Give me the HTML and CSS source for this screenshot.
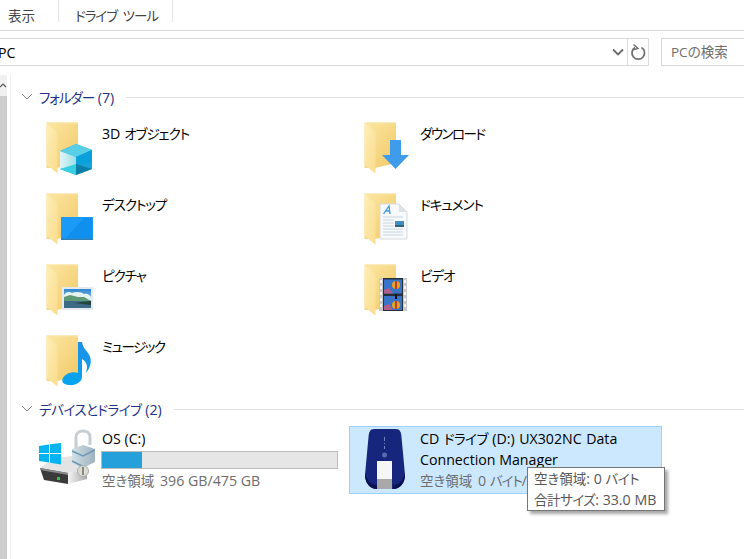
FILE: index.html
```html
<!DOCTYPE html>
<html lang="ja">
<head>
<meta charset="utf-8">
<title>PC</title>
<link rel="stylesheet" href="styles.css">
</head>
<body>
<svg class="defs" width="0" height="0">
  <defs>
    <linearGradient id="fb" x1="0" y1="0" x2="1" y2="1"><stop offset="0" stop-color="#fde7a4"/><stop offset="1" stop-color="#f0c966"/></linearGradient>
    <linearGradient id="ff" x1="0" y1="0" x2="1" y2="1"><stop offset="0" stop-color="#fdeeb8"/><stop offset="1" stop-color="#fbdc8c"/></linearGradient>
    <linearGradient id="nt" x1="0" y1="0" x2="0" y2="1"><stop offset="0" stop-color="#1f8fe6"/><stop offset="1" stop-color="#05a6f0"/></linearGradient>
    <linearGradient id="cl" x1="0" y1="0" x2="1" y2="0"><stop offset="0" stop-color="#e2f5f7"/><stop offset="1" stop-color="#9bdfe6"/></linearGradient>
    <linearGradient id="sky" x1="0" y1="0" x2="0" y2="1"><stop offset="0" stop-color="#2e86d0"/><stop offset="1" stop-color="#cfe6f2"/></linearGradient>
    <linearGradient id="lk" x1="0" y1="0" x2="1" y2="0"><stop offset="0" stop-color="#d3e0e7"/><stop offset="1" stop-color="#9cb2bf"/></linearGradient>
    <linearGradient id="hd" x1="0" y1="0" x2="1" y2="0"><stop offset="0" stop-color="#f4f4f4"/><stop offset="1" stop-color="#a8a8a8"/></linearGradient>
    <symbol id="folder" viewBox="0 0 48 54" overflow="visible">
      <path d="M0.5 0.5H32V41L11 46H0.5Z" fill="url(#fb)"/>
      <path d="M0.5 0.5H32V1.5H0.5Z" fill="#f8e4ac"/>
      <path d="M0.5 1L11.500 10V51.500L0.500 43Z" fill="url(#ff)"/>
    </symbol>
  </defs>
</svg>

<header class="tabs">
  <div class="tab tab-view"><span class="ja">表示</span></div>
  <div class="tab tab-drive"><span class="kana spaced">ドライブ ツール</span></div>
</header>

<div class="address-row">
  <div class="address">
    <span class="crumb">PC</span>
    <svg class="chev" width="12" height="8" viewBox="0 0 12 8"><path d="M1 1.500L6 6.500L11 1.500" fill="none" stroke="#6a6a6a" stroke-width="1.800"/></svg>
    <span class="refresh">
      <svg width="16" height="17" viewBox="0 0 16 17"><path d="M5 3.500A6.300 6.300 0 1 0 11.500 3.500" fill="none" stroke="#707070" stroke-width="1.700"/><path d="M3.500 0.500L8 4.500L3 5.800" fill="none" stroke="#707070" stroke-width="1.400"/></svg>
    </span>
  </div>
  <div class="search"><span class="ja">PCの検索</span></div>
</div>

<main class="main">
  <div class="scrollbar"><div class="scroll-up"><svg width="7" height="5" viewBox="0 0 7 5"><path d="M0 4L3 1L6 4" fill="none" stroke="#555" stroke-width="1.200"/></svg></div><div class="scroll-thumb"></div></div>
  <div class="content">
    <section>
      <h2 class="group"><svg width="12" height="8" viewBox="0 0 12 8"><path d="M1 1L6 6L11 1" fill="none" stroke="#8a8a8a"/></svg><span><span class="kana">フォルダー</span> (7)</span><i></i></h2>
      <div class="folders">
        <div class="item">
          <svg class="icon" width="48" height="54" viewBox="0 0 48 54"><use href="#folder" width="48" height="54"/>
            <path d="M30 22L46 28V47L30 53L14 47V29Z" fill="#16a3d8"/>
            <path d="M30 22L46 28L30 35L14 29Z" fill="#58cfe6"/>
            <path d="M14 29L30 35V44L14 47Z" fill="url(#cl)"/>
            <path d="M30 35L46 28V40L30 44Z" fill="#0aa0dc"/>
            <path d="M14 47L30 42V53Z" fill="#38cfe0"/>
            <path d="M30 42L46 47L30 53Z" fill="#0c7fa8"/>
          </svg>
          <span class="label">3D <span class="kana">オブジェクト</span></span>
        </div>
        <div class="item">
          <svg class="icon" width="48" height="54" viewBox="0 0 48 54"><use href="#folder" width="48" height="54"/>
            <path d="M26 18H37V33H45L31.500 47L18 33H26Z" fill="#3e9ceb"/>
          </svg>
          <span class="label"><span class="kana tight">ダウンロード</span></span>
        </div>
        <div class="item">
          <svg class="icon" width="48" height="54" viewBox="0 0 48 54"><use href="#folder" width="48" height="54"/>
            <rect x="15" y="24" width="32" height="23" fill="#1b9bf7"/>
            <path d="M20 45L38 25H46V45Z" fill="#0f8fee"/>
            <rect x="15" y="45.500" width="32" height="1.500" fill="#2f7fb8"/>
          </svg>
          <span class="label"><span class="kana">デスクトップ</span></span>
        </div>
        <div class="item">
          <svg class="icon" width="48" height="54" viewBox="0 0 48 54"><use href="#folder" width="48" height="54"/>
            <path d="M16 11H35L43 19V46H16Z" fill="#f7f9fb" stroke="#d5dadf"/>
            <path d="M35 11V19H43Z" fill="#dbe2e8"/>
            <path d="M19.500 21L25 13L26 21M21.500 18H26" fill="none" stroke="#3b9be0" stroke-width="1.300"/>
            <path d="M19 24H39M19 27H30M19 30H30M19 33H30M19 36H39M19 39H39M19 42H39" stroke="#c8d6e2"/>
            <rect x="31" y="28" width="9" height="6" fill="#3f8fc4"/><rect x="31" y="32" width="9" height="2" fill="#36607a"/>
          </svg>
          <span class="label"><span class="kana">ドキュメント</span></span>
        </div>
        <div class="item">
          <svg class="icon" width="48" height="54" viewBox="0 0 48 54"><use href="#folder" width="48" height="54"/>
            <rect x="16" y="23" width="31" height="23" fill="#e6e9ed"/>
            <rect x="18" y="25" width="27" height="19" fill="url(#sky)"/>
            <path d="M18 31C21 27 24 28 26 29C30 27 36 28 38 30C41 29 44 31 45 33V36H18Z" fill="#e6f2f0"/>
            <path d="M18 33L24 31L32 33L38 33L45 37V38H18Z" fill="#5f9a76"/>
            <path d="M18 37H45V44H18Z" fill="#3c6a85"/>
            <path d="M28 39L45 37V41Z" fill="#26433c"/>
          </svg>
          <span class="label"><span class="kana">ピクチャ</span></span>
        </div>
        <div class="item">
          <svg class="icon" width="48" height="54" viewBox="0 0 48 54"><use href="#folder" width="48" height="54"/>
            <rect x="15" y="14" width="28" height="33" fill="#c9c9c9"/>
            <rect x="19" y="14" width="20" height="33" fill="#26303a"/>
            <path d="M16 16h2v3h-2zM16 22h2v3h-2zM16 28h2v3h-2zM16 34h2v3h-2zM16 40h2v3h-2zM40 16h2v3h-2zM40 22h2v3h-2zM40 28h2v3h-2zM40 34h2v3h-2zM40 40h2v3h-2z" fill="#f4f4f4"/>
            <rect x="20" y="15.500" width="18" height="14" fill="#3a74c8"/>
            <rect x="20" y="32" width="18" height="14" fill="#3a74c8"/>
            <path d="M20 29.500V26L25 24L29 29.500ZM20 46V42L25 40L29 46Z" fill="#b0608a"/>
            <circle cx="32" cy="21" r="4" fill="#e8a020"/><circle cx="32" cy="41" r="4" fill="#e8a020"/>
            <path d="M32 17V25M32 37V45" stroke="#b8402a" stroke-width="2"/>
            <rect x="31" y="30" width="2" height="5" fill="#111"/>
          </svg>
          <span class="label"><span class="kana">ビデオ</span></span>
        </div>
        <div class="item">
          <svg class="icon" width="48" height="54" viewBox="0 0 48 54"><use href="#folder" width="48" height="54"/>
            <path d="M32 7L36 7C37 13 40 15 42 18C46 23 46 31 40 38C42 31 41 27 36 24V42C36 47 29 51 23 50C17 50 15 46 17 43C20 38 27 36 32 38Z" fill="url(#nt)"/>
          </svg>
          <span class="label"><span class="kana tight">ミュージック</span></span>
        </div>
      </div>
    </section>
    <section>
      <h2 class="group"><svg width="12" height="8" viewBox="0 0 12 8"><path d="M1 1L6 6L11 1" fill="none" stroke="#8a8a8a"/></svg><span><span class="kana loose">デバイスとドライブ</span> (2)</span><i></i></h2>
      <div class="drives">
        <div class="drive">
          <div class="drive-icon">
            <svg width="56" height="56" viewBox="0 0 56 56">
              <path d="M1 39L15 29L35 27L48 41L29 44Z" fill="#e4e4e4"/>
              <path d="M29 44L48 41V50L29 55Z" fill="url(#hd)"/>
              <path d="M1 39L29 44V55L5 51Z" fill="#3a3a3a"/>
              <path d="M1 39L29 44V46L1.500 41Z" fill="#8a8a8a"/>
              <rect x="18" y="48" width="3" height="3" fill="#35c24a"/>
              <path d="M0 17L10 15.500V24H0ZM11 15.300L22 14V24H11ZM0 25H10V33.500L0 32ZM11 25H22V35.500L11 33.700Z" fill="#04b4f0"/>
              <path d="M37 21V8C37 0 51 0 51 8V16" fill="none" stroke="#c6ced3" stroke-width="3"/>
              <path d="M33 20L44 16L56 20V33L44 39L33 34Z" fill="url(#lk)"/>
              <path d="M33 22L44 27L56 21M33 32L43 37" fill="none" stroke="#6d9ab8" stroke-width="1.500"/>
              <circle cx="44" cy="42" r="5.500" fill="#dcdcd4" stroke="#aaa"/>
              <path d="M43 38H45V46H43Z" fill="#8b8b80"/>
            </svg>
          </div>
          <div class="drive-text">
            <div class="name">OS (C:)</div>
            <div class="bar"><div class="fill" style="width:17%"></div></div>
            <div class="free"><span class="ja">空き領域</span> 396 GB/475 GB</div>
          </div>
        </div>
        <div class="drive selected">
          <div class="drive-icon">
            <svg width="40" height="60" viewBox="0 0 40 60">
              <path d="M9 0H31C35 0 36 3 36.500 8L40 46C40 54 35 60 28 60H12C5 60 0 54 0 46L3.500 8C4 3 5 0 9 0Z" fill="#16267c"/>
              <path d="M0 44C2 52 6 56 12 56V60C5 60 0 54 0 46ZM40 44C38 52 34 56 28 56V60C35 60 40 54 40 46Z" fill="#0b1250"/>
              <rect x="12" y="32" width="15" height="18" fill="#f6f6f6"/>
              <rect x="12" y="50" width="15" height="10" fill="#a9a9a9"/>
              <circle cx="19.500" cy="26" r="2.500" fill="#5a68b0"/>
              <path d="M19.500 8V12M19.500 14V15M19.500 17V20" stroke="#7682c2"/>
            </svg>
          </div>
          <div class="drive-text">
            <div class="name line wide">CD <span class="kana loose">ドライブ</span> (D:) UX302NC Data</div>
            <div class="name line">Connection Manager</div>
            <div class="free line"><span class="ja">空き領域</span> 0 <span class="kana">バイト</span>/33.0 MB</div>
          </div>
          <div class="tooltip"><div class="tip-line"><span class="ja">空き領域</span>: 0 <span class="kana loose">バイト</span></div><div class="tip-line"><span class="ja snug">合計サイズ</span>: 33.0 MB</div></div>
        </div>
      </div>
    </section>
  </div>
</main>
</body>
</html>
```

FILE: styles.css
```css
* { box-sizing: border-box; }
html, body { margin: 0; height: 100%; overflow: hidden; background: #fff; }
body { width: 744px; height: 559px; font-family: "Open Sans", "Noto Sans CJK JP", sans-serif; font-size: 14.2px; font-feature-settings: "palt"; color: #000; }
.defs { position: absolute; }

.ja { font-size: 13.5px; }
.kana { font-size: 13.5px; letter-spacing: -1px; }
.tight { letter-spacing: -1.500px; }
.loose { letter-spacing: -.5px; }
.spaced { word-spacing: 3px; }
.snug { letter-spacing: -.5px; }
.wide { word-spacing: .8px; }

.tabs { display: flex; height: 31px; border-bottom: 1px solid #dadada; align-items: flex-start; color: #444; }
.tab { height: 22px; line-height: 31px; border-right: 1px solid #e4e4e4; }
.tab-view { width: 59px; padding-left: 8px; }
.tab-drive { width: 114px; padding-left: 16px; }

.address-row { display: flex; height: 28px; margin-top: 7px; }
.address { display: flex; align-items: center; width: 649px; border: 1px solid #d9d9d9; border-left: 0; }
.crumb { margin-left: -2px; flex: 1; }
.chev { margin-right: 3px; }
.refresh { display: flex; align-items: center; justify-content: center; width: 21px; height: 100%; border-left: 1px solid #d9d9d9; }
.search { flex: 1; margin-left: 12px; padding-left: 9px; line-height: 25px; border: 1px solid #d9d9d9; border-right: 0; color: #6d6d6d; }

.main { display: flex; height: 495px; margin-top: 9px; }
.scrollbar { width: 7px; display: flex; flex-direction: column; }
.scroll-up { height: 21px; background: #f0f0f0; display: flex; align-items: center; }
.scroll-thumb { flex: 1; background: #cdcdcd; }
.content { flex: 1; margin-left: 3px; border-left: 1px solid #efefef; padding-top: 12px; min-width: 0; }

.group { display: flex; align-items: center; height: 20px; margin: 0; padding-left: 10px; font-size: 14.2px; font-weight: 400; color: #1e3287; gap: 6px; }
.group i { flex: 1; height: 1px; margin-left: 6px; background: #e2e2e2; }

.folders { display: grid; grid-template-columns: 318px 318px; grid-auto-rows: 71px; margin-top: 8px; padding-left: 35px; }
.item { display: flex; padding-top: 7px; }
.icon { flex: none; overflow: visible; }
.label { margin-left: 8px; line-height: 20px; margin-top: 2px; }

.drives { display: grid; grid-template-columns: 318px 313px; margin-top: 7px; padding-left: 20px; }
.drive { position: relative; display: flex; height: 68px; border: 1px solid transparent; padding-top: 2px; }
.selected { background: #cce8ff; border-color: #99d1ff; }
.drive-icon { flex: none; width: 70px; display: flex; justify-content: center; }
.drive-text { flex: 1; min-width: 0; line-height: 20px; }
.bar { width: 237px; height: 18px; margin: 2px 0 0 -1px; border: 1px solid #bcbcbc; background: #e6e6e6; }
.fill { height: 100%; background: #26a0da; }
.free { margin-top: 2px; color: #6d6d6d; }
.free .ja { margin-right: 2px; }
.line { margin: 0 0 1px; line-height: 20px; }
.tooltip { position: absolute; left: 177px; top: 40px; width: 138px; height: 44px; padding: 0 6px; background: #fff; border: 1px solid #767676; color: #575757; box-shadow: 3px 3px 3px rgba(0,0,0,.35); white-space: nowrap; }
.tip-line { height: 21px; line-height: 21px; }
```
